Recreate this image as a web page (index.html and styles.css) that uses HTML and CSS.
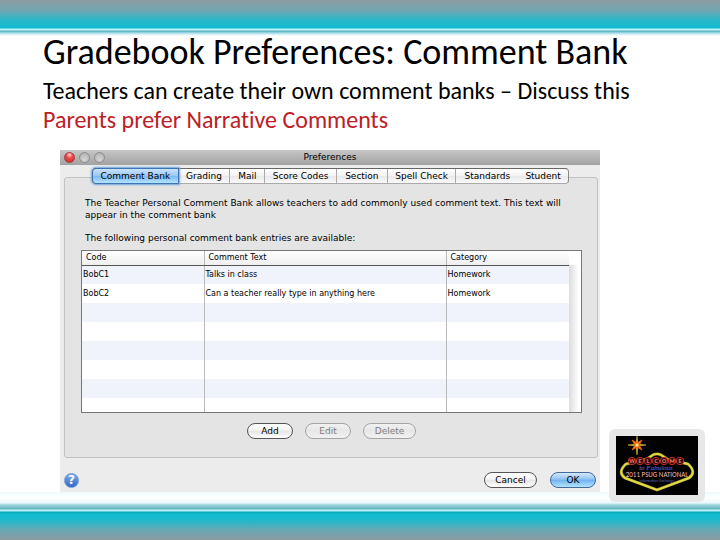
FILE: index.html
```html
<!DOCTYPE html>
<html lang="en">
<head>
<meta charset="utf-8">
<title>Gradebook Preferences: Comment Bank</title>
<link rel="stylesheet" href="styles.css">
</head>
<body>
<main class="slide">
  <div class="band band-top"></div>
  <header class="heading">
    <h1>Gradebook Preferences: Comment Bank</h1>
    <p>Teachers can create their own comment banks – Discuss this</p>
    <p class="accent">Parents prefer Narrative Comments</p>
  </header>

  <section class="window">
    <div class="titlebar">
      <div class="lights"><i class="light red"></i><i class="light"></i><i class="light"></i></div>
      <h2>Preferences</h2>
    </div>
    <div class="window-body">
      <nav class="tabs">
        <button class="tab selected">Comment Bank</button>
        <button class="tab">Grading</button>
        <button class="tab">Mail</button>
        <button class="tab">Score Codes</button>
        <button class="tab">Section</button>
        <button class="tab">Spell Check</button>
        <button class="tab plain">Standards</button>
        <button class="tab">Student</button>
      </nav>
      <div class="group">
        <p>The Teacher Personal Comment Bank allows teachers to add commonly used comment text. This text will<br>appear in the comment bank</p>
        <p class="available">The following personal comment bank entries are available:</p>
        <div class="grid-frame">
          <table class="entries">
            <colgroup><col class="col-code"><col class="col-text"><col class="col-category"></colgroup>
            <thead><tr><th>Code</th><th>Comment Text</th><th>Category</th></tr></thead>
            <tbody>
              <tr><td>BobC1</td><td>Talks in class</td><td>Homework</td></tr>
              <tr><td>BobC2</td><td>Can a teacher really type in anything here</td><td>Homework</td></tr>
              <tr><td></td><td></td><td></td></tr>
              <tr><td></td><td></td><td></td></tr>
              <tr><td></td><td></td><td></td></tr>
              <tr><td></td><td></td><td></td></tr>
              <tr><td></td><td></td><td></td></tr>
              <tr class="last"><td></td><td></td><td></td></tr>
            </tbody>
          </table>
          <div class="scroll-track"></div>
        </div>
        <div class="actions">
          <button class="pill">Add</button>
          <button class="pill" disabled>Edit</button>
          <button class="pill wide" disabled>Delete</button>
        </div>
      </div>
      <div class="dialog-row">
        <button class="help" aria-label="Help">?</button>
        <div class="confirm">
          <button class="pill wide">Cancel</button>
          <button class="pill primary">OK</button>
        </div>
      </div>
    </div>
  </section>

  <div class="band band-bottom"></div>

  <div class="badge">
    <svg viewBox="0 0 82 59" role="img" aria-label="Welcome, 2011 PSUG National">
      <rect width="82" height="59" fill="#020202"/>
      <path d="M41 18C35 17 34 24 27 24L10 28Q1 36 9 42L41 54L73 42Q81 36 72 28L55 24C48 24 47 17 41 18Z" fill="none" stroke="#8d8426" stroke-width="3"/>
      <path d="M41 18C35 17 34 24 27 24L10 28Q1 36 9 42L41 54L73 42Q81 36 72 28L55 24C48 24 47 17 41 18Z" fill="none" stroke="#e2dc43" stroke-width="2"/>
      <path d="M21 0L22 8L30 9L22 10L21 19L20 10L12 9L20 8Z" fill="#f3d35b" stroke="#c9aa38" stroke-width=".6"/>
      <path d="M16 4L21 7L26 4L23 9L26 14L21 11L16 14L19 9Z" fill="#f27a1a" stroke="#e85c13"/>
      <circle cx="21" cy="9" r="1.5" fill="#ffe98a"/>
      <g fill="#300b0c" stroke="#bd302b">
        <circle cx="16" cy="25" r="3.7"/><circle cx="24" cy="25" r="3.7"/><circle cx="32" cy="25" r="3.7"/><circle cx="40" cy="25" r="3.7"/><circle cx="48" cy="25" r="3.7"/><circle cx="56" cy="25" r="3.7"/><circle cx="64" cy="25" r="3.7"/>
      </g>
      <text class="neon" x="16 24 32 40 48 56 64" y="27">WELCOME</text>
      <text class="script" x="40" y="34">to Fabulous</text>
      <text class="place" x="41" y="41">2011 PSUG NATIONAL</text>
      <text class="exchange" x="41" y="46">Information Exchange</text>
    </svg>
  </div>
</main>
</body>
</html>
```
FILE: styles.css
```css
* { box-sizing: border-box; }
body { margin: 0; background: #fff; color: #000; font-family: "DejaVu Sans", "Open Sans", sans-serif; }
h1, h2, p { margin: 0; font-weight: 400; }
button { margin: 0; padding: 0; font: inherit; color: inherit; }

.slide { position: relative; min-height: 100vh; display: flex; flex-direction: column; }
.band-top {
  height: 36px;
  background: linear-gradient(#8c9ca3 0, #73a5af 10px, #28b8ca 20px, #10bacf 28px, #b9f4f6 29px, #b9f4f6 30px, #58adbc 31px, #a5dce8 33px, #e8f8fb 35px, #fff 36px);
}
.band-bottom {
  height: 48px; margin-top: auto;
  background: linear-gradient(#edfafc 0, #fff 6px, #e6f7f9 11px, #9bd4db 13px, #66b4bf 17px, #b9f4f6 18px, #b9f4f6 19px, #0ba3b6 20px, #10bacf 22px, #1db9cc 28px, #68a8b3 38px, #8c9aa1 48px);
}

.heading { padding: 0 43px; font-family: Carlito, Lato, sans-serif; font-variant-ligatures: none; }
.heading h1 { font-size: 36px; line-height: 32px; margin: 0 0 8px; }
.heading p { font-size: 24px; line-height: 29px; }
.heading .accent { color: #bd2024; }

.window { width: 75%; margin: 16px 0 0 60px; background: #ececec; font-size: 9px; }
.titlebar {
  position: relative; height: 15px; display: grid; place-items: center;
  background: linear-gradient(#c6c6c6, #a2a2a2);
}
.titlebar h2 { font-size: 9px; line-height: 15px; }
.lights { position: absolute; left: 4px; top: 2px; display: flex; gap: 4px; }
.light { width: 11px; height: 11px; border-radius: 50%; border: 1px solid #8d8d8d; background: radial-gradient(circle at 50% 70%, #d6d6d6, #a9a9a9); }
.light.red { border-color: #a33c3c; background: radial-gradient(circle at 50% 20%, #ffd0d0 0, #e8494c 40%, #d3282e); }

.window-body { padding: 3px 2px 4px 4px; }
.tabs {
  position: relative; display: grid; grid-template-columns: 86fr 52fr 35fr 72fr 51fr 69fr 62fr 50fr;
  height: 16px; margin: 0 29px 0 28px;
  border: 1px solid #777; border-color: #666 #888 #aaa; border-radius: 4px;
  background: linear-gradient(#fff, #f2f2f2 50%, #e9e9e9 51%, #fafafa);
}
.tab { border: 0; border-right: 1px solid #aaa; background: none; line-height: 14px; white-space: nowrap; }
.tab.plain, .tab:last-child { border-right: 0; }
.tab.selected {
  margin: -1px 0 -1px -1px; border: 1px solid #3c74b4; border-radius: 4px 0 0 4px;
  background: linear-gradient(#c9e2f9, #98c8f4 50%, #7db9f0 51%, #b5e3ff);
  box-shadow: 0 0 2px 1px #6fa3da;
}

.group { margin-top: -7px; padding: 19px 15px 18px 16px; border: 1px solid #c2c2c2; border-radius: 3px; background: #e4e4e4; }
.group p { padding-left: 4px; line-height: 12px; white-space: nowrap; }
.group .available { margin: 11px 0 6px; }

.grid-frame { display: flex; border: 1px solid #777; background: #fff; }
.entries { flex: 1; table-layout: fixed; border-collapse: collapse; font-size: 8px; line-height: 12px; }
.entries th, .entries td { padding: 0 0 0 1px; text-align: left; border-right: 1px solid #bbb; font-weight: 400; }
.entries th:last-child, .entries td:last-child { border-right: 0; }
.entries th { height: 14px; padding-left: 4px; border-bottom: 1px solid #555; background: linear-gradient(#fff, #efefef); }
.entries td { height: 19px; }
.entries .last td { height: 14px; }
.entries tbody tr:nth-child(odd) { background: #f0f3fa; }
.col-code { width: 122px; }
.col-text { width: 242px; }
.scroll-track { width: 12px; margin-top: 14px; background: linear-gradient(90deg, #dcdcdc, #fff 80%); }

.actions { display: flex; justify-content: center; gap: 12px; margin-top: 10px; }
.pill {
  width: 46px; height: 16px; border: 1px solid #555; border-radius: 8px; line-height: 14px;
  background: linear-gradient(#fff, #f4f4f4 45%, #e5e5e5 50%, #fff);
}
.pill.wide { width: 53px; }
.pill:disabled { color: #808080; border-color: #a5a5a5; background: linear-gradient(#f1f1f1, #e7e7e7 50%, #f1f1f1); }
.pill.primary { border-color: #42689c; background: linear-gradient(#d5e8fa, #8fc3f3 45%, #6eb2f0 50%, #b4e4ff); }

.dialog-row { display: flex; align-items: center; justify-content: space-between; margin-top: 14px; padding-right: 2px; }
.help {
  width: 15px; height: 15px; border: 1px solid #6f9ad6; border-radius: 50%;
  background: linear-gradient(#7daae8, #3568c9); color: #fff; font-size: 12px; font-weight: 700; line-height: 13px;
}
.confirm { display: flex; gap: 13px; }

.badge { position: absolute; right: 15px; bottom: 38px; width: 96px; padding: 7px; border-radius: 6px; background: #e8e8e8; }
.badge svg { display: block; width: 100%; }
.badge text { text-anchor: middle; }
.neon { fill: #ff7a60; font-family: Carlito, Lato, sans-serif; font-size: 6px; font-weight: 700; }
.script { fill: #6570ec; font-family: "Liberation Serif", serif; font-style: italic; font-size: 7px; }
.place { fill: #f8b8ae; font-family: Carlito, Lato, sans-serif; font-size: 7px; }
.exchange { fill: #5a66bd; font-family: Carlito, Lato, sans-serif; font-size: 4px; }
```
